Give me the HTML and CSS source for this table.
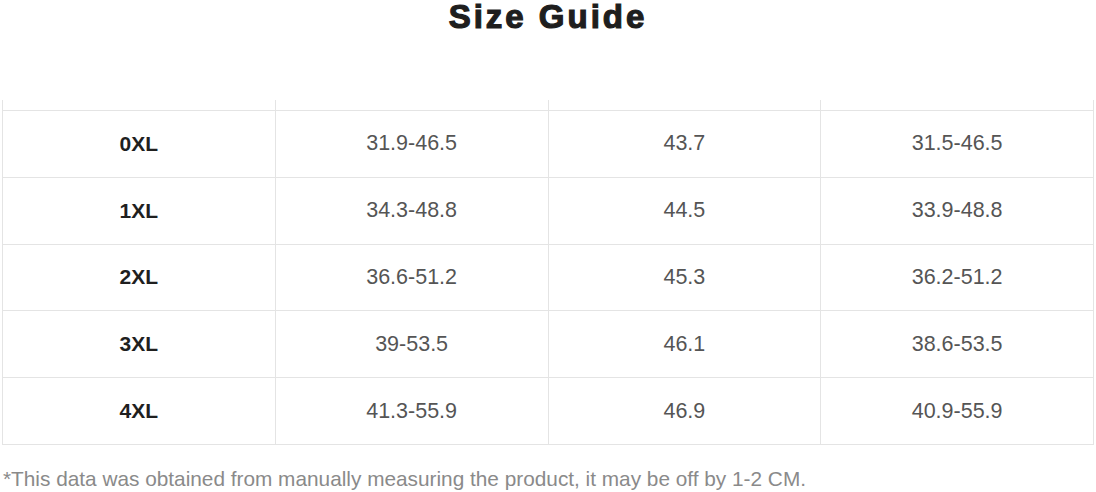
FILE: index.html
```html
<!DOCTYPE html>
<html>
<head>
<meta charset="utf-8">
<link rel="stylesheet" href="styles.css">
</head>
<body>
<div class="page">
  <h1 class="title">Size Guide</h1>
  <table class="sizes">
    <thead>
      <tr class="head"><th></th><th></th><th></th><th></th></tr>
    </thead>
    <tbody>
      <tr><td class="size">0XL</td><td>31.9-46.5</td><td>43.7</td><td>31.5-46.5</td></tr>
      <tr><td class="size">1XL</td><td>34.3-48.8</td><td>44.5</td><td>33.9-48.8</td></tr>
      <tr><td class="size">2XL</td><td>36.6-51.2</td><td>45.3</td><td>36.2-51.2</td></tr>
      <tr><td class="size">3XL</td><td>39-53.5</td><td>46.1</td><td>38.6-53.5</td></tr>
      <tr><td class="size">4XL</td><td>41.3-55.9</td><td>46.9</td><td>40.9-55.9</td></tr>
    </tbody>
  </table>
  <p class="note">*This data was obtained from manually measuring the product, it may be off by 1-2 CM.</p>
</div>
</body>
</html>
```
FILE: styles.css
```css
html, body {
  margin: 0;
  padding: 0;
  background: #ffffff;
}
.page {
  width: 1096px;
  font-family: "Liberation Sans", Arial, sans-serif;
}
.title {
  margin: 0;
  height: 101px;
  text-align: center;
  font-size: 33px;
  line-height: 35px;
  margin-top: -1px;
  font-weight: 700;
  letter-spacing: 3px;
  color: #1e1e1e;
  -webkit-text-stroke: 1.2px #1e1e1e;
}
.sizes {
  margin-left: 2px;
  width: 1092px;
  border-collapse: collapse;
  table-layout: fixed;
}
.sizes th,
.sizes td {
  border: 1px solid #e4e4e4;
  padding: 0;
  text-align: center;
}
.head th {
  height: 10px;
  border-top: none;
}
.sizes td {
  height: 65.8px;
  font-size: 21.5px;
  color: #555555;
}
.sizes td.size {
  font-size: 21px;
  font-weight: 700;
  color: #1f1f1f;
}
.note {
  margin: 22px 0 0 3px;
  font-size: 20.8px;
  color: #8a8a8a;
}
```
